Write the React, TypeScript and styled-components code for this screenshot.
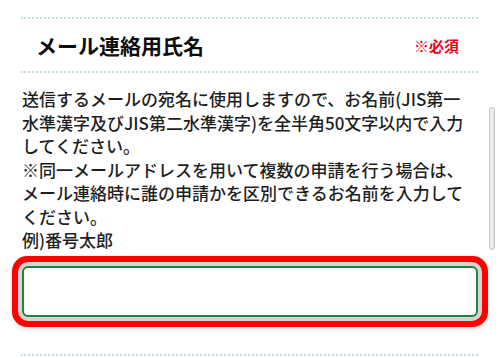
import React from "react";
import styled, { createGlobalStyle } from "styled-components";

const Global = createGlobalStyle`
  html, body { margin: 0; padding: 0; background: #fff; }
  body { font-family: "Noto Sans CJK JP", "Noto Sans", sans-serif; }
  * { box-sizing: border-box; }
`;

const Page = styled.div`
  position: relative;
  width: 500px;
  height: 358px;
  overflow: hidden;
  padding: 17px 22px 0 21px;
`;

const Section = styled.section`
  border-top: 2px dotted #bfe6c9;
  border-bottom: 2px dotted #bfe6c9;
`;

const HeadRow = styled.div`
  display: flex;
  align-items: center;
  justify-content: space-between;
  height: 54px;
  padding: 0 19px 0 15px;
  border-bottom: 2px dotted #bfe6c9;
`;

const Title = styled.h2`
  margin: 0;
  font-size: 21px;
  font-weight: 700;
  color: #0d0d0d;
  line-height: 1;
`;

const Required = styled.span`
  font-size: 15px;
  font-weight: 700;
  color: #e8001c;
  line-height: 1;
`;

const Note = styled.p`
  margin: 14px 0 0 1px;
  font-size: 17px;
  font-weight: 500;
  line-height: 23.5px;
  color: #1e1e1e;
  white-space: nowrap;
`;

const Field = styled.div`
  margin: 14px 0 37px 1px;
  height: 51px;
  border: 2px solid #23833a;
  border-radius: 6px;
  background: #fff;
  box-shadow: 0 0 0 4px #d4d4d4, 0 0 0 10px #ff0000, 0 2px 6px 9px rgba(0, 0, 0, 0.18);
`;

const ScrollThumb = styled.div`
  position: absolute;
  left: 489px;
  top: 107px;
  width: 6px;
  height: 143px;
  border: 1px solid #c4c4c4;
  border-radius: 3px;
  background: linear-gradient(to right, #f4f4f4, #e4e4e4);
`;

export default function App() {
  return (
    <>
      <Global />
      <Page>
        <Section>
          <HeadRow>
            <Title>メール連絡用氏名</Title>
            <Required>※必須</Required>
          </HeadRow>
          <Note>
            送信するメールの宛名に使用しますので、お名前(JIS第一
            <br />
            水準漢字及びJIS第二水準漢字)を全半角50文字以内で入力
            <br />
            してください。
            <br />
            ※同一メールアドレスを用いて複数の申請を行う場合は、
            <br />
            メール連絡時に誰の申請かを区別できるお名前を入力して
            <br />
            ください。
            <br />
            例)番号太郎
          </Note>
          <Field />
        </Section>
        <ScrollThumb />
      </Page>
    </>
  );
}
